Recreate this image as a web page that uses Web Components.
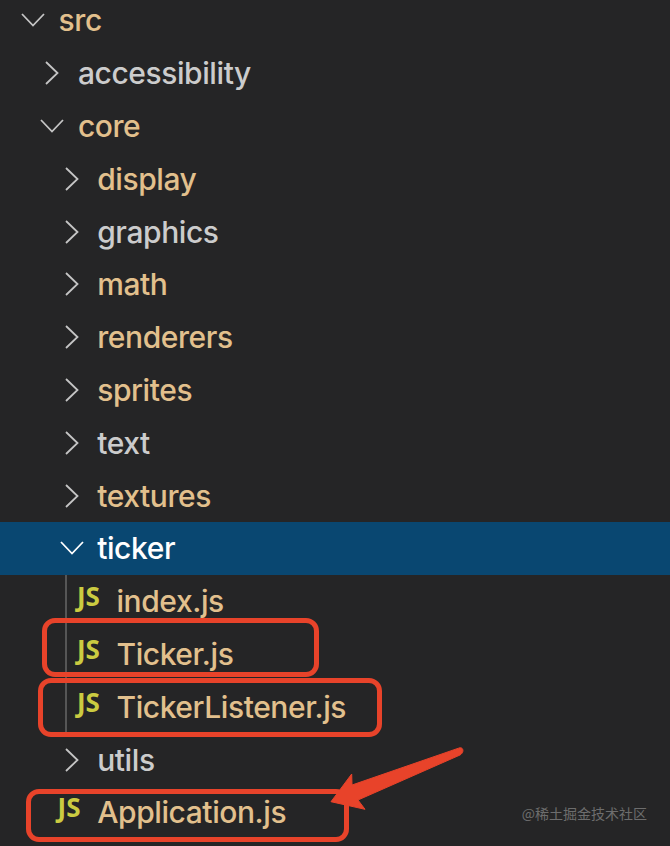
<!DOCTYPE html>
<html><head><meta charset="utf-8">
<style>
html,body{margin:0;padding:0;background:#252526;}
body{width:670px;height:846px;overflow:hidden;position:relative;}
</style></head><body>
<template id="row-t">
<style>
:host{display:flex;align-items:center;height:52.8px;box-sizing:border-box;padding-left:calc(var(--lv,0)*19.3px + 21px);font:500 30px/1 Inter,"Liberation Sans",sans-serif;letter-spacing:-.42px;color:var(--c,#cccccc);white-space:nowrap;position:relative;}
:host([sel]){background:#094771;color:#fff;}
.ic{flex:none;width:37.6px;height:30px;display:flex;align-items:center;}
svg{display:block;}
.js{font:700 26px/1 "Open Sans","Liberation Sans",sans-serif;color:#cbcb41;letter-spacing:0;transform:translate(-2px,-5px);}
:host([guide])::before{content:"";position:absolute;left:65px;top:0;bottom:0;width:2px;background:#565656;}
</style>
<span class="ic"></span><span class="t"><slot></slot></span>
</template>
<template id="tree-t"><style>:host{display:block;margin-top:-6px;}</style><slot></slot></template>
<template id="box-t"><style>:host{display:block;position:absolute;box-sizing:border-box;border:5px solid #e8432a;border-radius:13px;}</style></template>
<template id="mark-t"><style>:host{display:block;position:absolute;right:23px;top:806px;font:400 14px/1 "Noto Sans CJK SC","Liberation Sans",sans-serif;color:#6d6d6d;}</style><slot></slot></template>
<template id="arrow-t"><style>:host{display:block;position:absolute;left:325px;top:740px;width:150px;height:90px;}svg{display:block}</style>
<svg width="150" height="90" viewBox="0 0 150 90"><path d="M133.5 8.2C138 6 140 12 135 15L33 60 40 69.3 6 61.7 26.7 34 27 45Z" fill="#e8432a" stroke="#e8432a" stroke-width="1" stroke-linejoin="round"/></svg></template>
<ft-tree>
<ft-row lv="0" open c="#e2c08d">src</ft-row>
<ft-row lv="1">accessibility</ft-row>
<ft-row lv="1" open c="#e2c08d">core</ft-row>
<ft-row lv="2" c="#e2c08d">display</ft-row>
<ft-row lv="2">graphics</ft-row>
<ft-row lv="2" c="#e2c08d">math</ft-row>
<ft-row lv="2" c="#e2c08d">renderers</ft-row>
<ft-row lv="2" c="#e2c08d">sprites</ft-row>
<ft-row lv="2">text</ft-row>
<ft-row lv="2" c="#e2c08d">textures</ft-row>
<ft-row lv="2" open sel>ticker</ft-row>
<ft-row lv="3" js guide c="#e2c08d">index.js</ft-row>
<ft-row lv="3" js guide c="#e2c08d">Ticker.js</ft-row>
<ft-row lv="3" js guide c="#e2c08d">TickerListener.js</ft-row>
<ft-row lv="2">utils</ft-row>
<ft-row lv="2" js c="#e2c08d">Application.js</ft-row>
</ft-tree>
<ft-box style="left:42px;top:618px;width:277px;height:59px"></ft-box>
<ft-box style="left:38px;top:678px;width:344px;height:59px"></ft-box>
<ft-box style="left:26px;top:789px;width:323px;height:53px"></ft-box>
<ft-arrow></ft-arrow>
<ft-mark>@稀土掘金技术社区</ft-mark>
<script>
function simple(name,id){customElements.define(name,class extends HTMLElement{constructor(){super();this.attachShadow({mode:'open'}).appendChild(document.getElementById(id).content.cloneNode(true));}});}
simple('ft-tree','tree-t');simple('ft-box','box-t');simple('ft-mark','mark-t');simple('ft-arrow','arrow-t');
customElements.define('ft-row',class extends HTMLElement{
constructor(){super();this.attachShadow({mode:'open'}).appendChild(document.getElementById('row-t').content.cloneNode(true));}
connectedCallback(){
this.style.setProperty('--lv',this.getAttribute('lv')||0);
if(this.getAttribute('c'))this.style.setProperty('--c',this.getAttribute('c'));
const ic=this.shadowRoot.querySelector('.ic');
const sel=this.hasAttribute('sel');
const col=sel?'#fff':'#c5c5c5';
if(this.hasAttribute('js')){ic.innerHTML='<span class="js">JS</span>';}
else if(this.hasAttribute('open')){ic.innerHTML='<svg width="24" height="14" viewBox="0 0 24 14" fill="none" stroke="'+col+'" stroke-width="1.8"><path d="M1 1L12 12.5 23 1"/></svg>';}
else{ic.innerHTML='<svg width="14" height="24" viewBox="0 0 14 24" fill="none" stroke="'+col+'" stroke-width="1.8" style="margin-left:5px"><path d="M1 1L12.5 12 1 23"/></svg>';}
}});
</script>
</body></html>
